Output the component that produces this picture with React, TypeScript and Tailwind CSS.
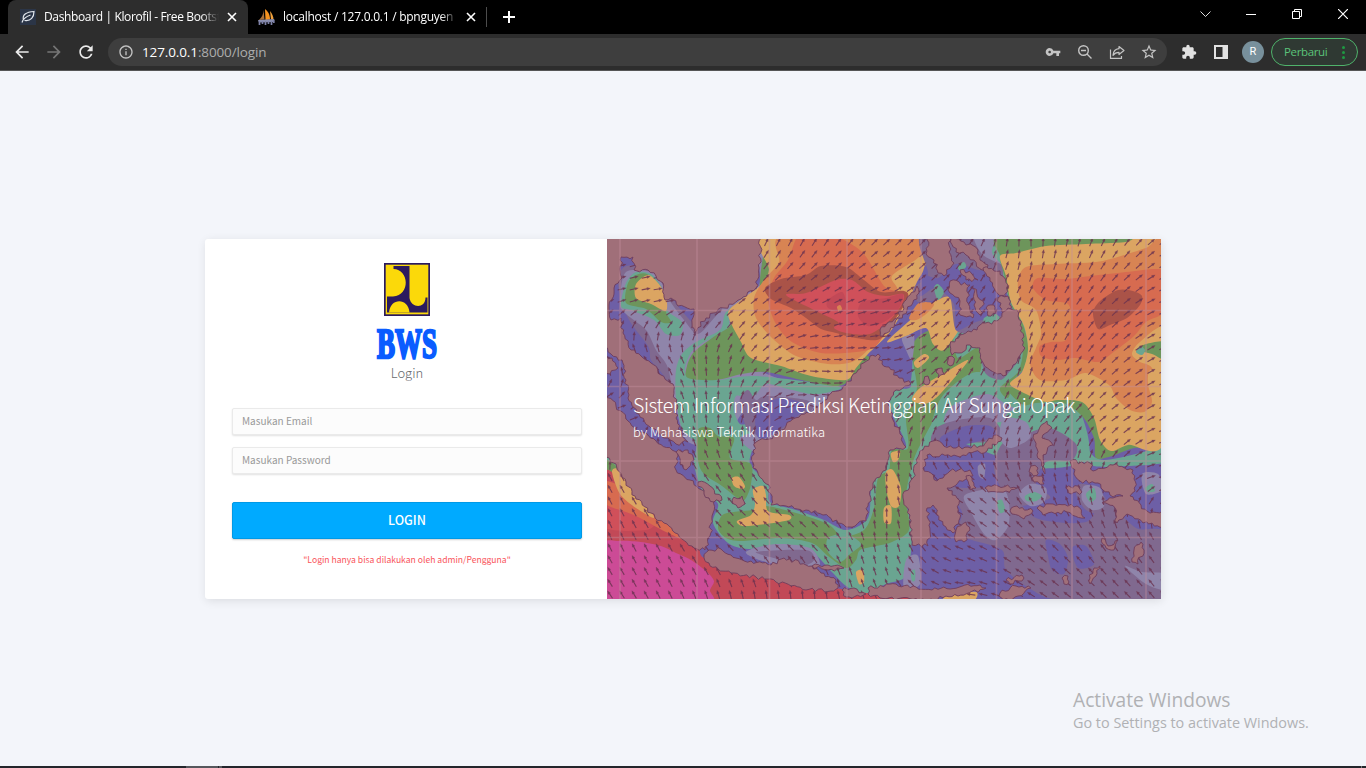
import type { ReactNode } from "react";
import {
  MdArrowBack,
  MdArrowForward,
  MdRefresh,
  MdInfoOutline,
  MdVpnKey,
  MdStarBorder,
  MdExtension,
} from "react-icons/md";

type Pt = [number, number];

const parse = (s: string): Pt[] =>
  s.trim().split(/\s+/).map((p) => p.split(",").map(Number) as Pt);

/* Closed Catmull-Rom curve through the given points. */
function smooth(s: string): string {
  const p = parse(s);
  const n = p.length;
  let d = `M${p[0][0]} ${p[0][1]}`;
  for (let i = 0; i < n; i++) {
    const a = p[(i - 1 + n) % n];
    const b = p[i];
    const c = p[(i + 1) % n];
    const e = p[(i + 2) % n];
    const k = 7;
    d += `C${(b[0] + (c[0] - a[0]) / k).toFixed(1)} ${(b[1] + (c[1] - a[1]) / k).toFixed(1)} ${(c[0] - (e[0] - b[0]) / k).toFixed(1)} ${(c[1] - (e[1] - b[1]) / k).toFixed(1)} ${c[0]} ${c[1]}`;
  }
  return d + "Z";
}

/* Irregular coastline: every edge is split and displaced sideways. */
function coast(s: string): string {
  const p = parse(s);
  let seed = Math.round(p[0][0] * 13 + p[0][1] * 7 + p.length * 31) + 5;
  const rnd = () => {
    seed = (seed * 16807) % 2147483647;
    return seed / 2147483647 - 0.5;
  };
  const out: string[] = [];
  p.forEach((a, i) => {
    const b = p[(i + 1) % p.length];
    const dx = b[0] - a[0];
    const dy = b[1] - a[1];
    const len = Math.hypot(dx, dy) || 1;
    const steps = Math.max(1, Math.round(len / 3));
    for (let j = 0; j < steps; j++) {
      const t = j / steps;
      const off = j === 0 ? 0 : rnd() * 4;
      out.push(`${(a[0] + dx * t - (dy / len) * off).toFixed(1)} ${(a[1] + dy * t + (dx / len) * off).toFixed(1)}`);
    }
  });
  return "M" + out.join("L") + "Z";
}

const MAUVE = "#80698f";
const LAV = "#8f85aa";
const TEAL = "#6aa591";
const GREEN = "#6d955b";
const TAN = "#dba562";
const ORANGE = "#d88453";
const CORAL = "#d76b50";
const BRICK = "#aa5348";
const ROSE = "#d0505a";
const RED = "#c24957";
const PINK = "#cc4b96";
const BLUE = "#6d5fa6";

const SEA: [string, string][] = [
  // gulf and south china sea
  [MAUVE, "12,45 20,28 50,32 66,60 86,84 96,84 130,60 130,120 120,170 70,160 58,138 45,122 42,108 22,80"],
  [LAV, "14,66 20,34 50,36 62,60 78,82 92,96 110,78 130,60 135,120 200,150 228,152 212,166 150,166 130,185 130,205 84,205 70,170 62,130 50,112 40,92 20,76"],
  [TEAL, "15,68 20,45 30,34 45,36 56,50 61,72 76,84 74,97 60,96 48,82 25,72"],
  [GREEN, "20,65 22,45 30,37 41,36 55,50 60,74 65,84 55,84 40,71"],
  [TAN, "30,60 30,46 42,37 52,45 60,58 60,73 45,66"],
  [LAV, "150,0 160,0 160,36 148,54 128,66 140,56 154,44"],
  [TEAL, "158,-4 170,-4 168,34 150,58 124,76 122,90 95,106 84,116 80,136 110,142 150,138 232,148 224,154 205,156 178,150 160,146 150,156 142,160 130,158 128,172 134,186 146,186 148,205 144,226 162,246 164,264 190,272 218,282 240,292 262,280 266,244 280,228 280,214 300,208 288,180 284,164 290,152 305,148 300,120 320,96 380,96 400,150 420,160 350,176 330,196 318,216 310,240 300,262 306,290 304,322 298,340 280,346 258,356 240,348 224,332 205,314 170,308 142,311 122,305 107,285 112,266 96,252 88,226 90,206 76,190 70,160 70,132 76,116 90,104 114,92 120,74 140,60 158,44"],
  [GREEN, "161,-4 170,-4 168,34 146,60 124,77 124,88 106,100 88,114 81,128 82,140 110,142 136,136 160,134 200,143 232,148 247,139 262,118 160,80"],
  [GREEN, "92,192 104,190 112,198 128,200 124,220 145,226 145,246 140,260 134,262 116,248 98,236 92,222"],
  [GREEN, "112,290 118,276 146,272 160,268 190,275 222,286 236,298 258,292 268,270 272,240 283,232 286,212 302,210 300,180 306,165 311,148 306,108 324,92 345,95 352,120 372,110 374,134 352,152 334,172 320,196 309,218 302,244 300,262 303,292 286,304 270,308 254,312 250,322 240,330 222,318 206,305 175,300 136,303 120,300"],
  [TEAL, "222,300 240,296 255,306 244,316 234,324 222,314"],
  [TAN, "131,283 145,277 149,266 147,252 157,248 160,257 162,273 183,277 183,282 160,286 137,288"],
  [TAN, "126,240 133,239 139,248 136,251 128,248"],
  [TAN, "285,215 294,213 292,222 287,224"],
  [TAN, "280,234 287,232 295,250 293,268 285,268 280,250"],
  [TAN, "278,270 285,268 285,285 278,284"],
  [TAN, "250,334 257,332 258,344 253,346"],
  [LAV, "140,314 170,306 204,310 214,326 202,330 160,324"],
  [MAUVE, "150,314 200,312 208,322 196,328 176,322"],
  // north west of borneo
  [LAV, "148,164 160,150 200,156 222,160 200,180 170,204 150,214 134,200 152,190"],
  [MAUVE, "134,160 142,152 150,162 160,158 200,162 206,172 180,190 146,196 136,176"],
  [BLUE, "152,170 176,160 200,168 184,184 160,200 150,196"],
  [TAN, "122,76 135,62 155,47 163,32 162,-4 322,-4 318,30 311,44 300,68 284,94 262,116 250,130 240,142 205,138 175,128 145,120 135,104"],
  [ORANGE, "180,-4 322,-4 314,18 286,38 292,54 280,84 270,102 262,112 246,124 222,126 190,118 166,100 150,80 148,60 158,42 173,24"],
  [CORAL, "194,-4 224,-4 256,14 278,48 292,56 284,84 270,108 250,114 215,115 186,104 170,86 162,62 168,40 182,22"],
  [BRICK, "159,50 175,41 200,37 215,28 240,29 258,42 275,54 298,53 302,60 290,80 274,101 250,100 230,95 215,91 200,80 185,70 165,61"],
  [ROSE, "180,57 200,55 230,42 246,42 262,54 280,58 297,56 296,66 284,82 264,96 240,95 228,90 232,84 208,72"],
  [RED, "256,64 280,60 297,56 292,72 278,84 262,88 252,78"],
  [RED, "222,62 236,54 240,66 236,74 222,70"],
  [ORANGE, "231,69 234,67 236,71 233,74"],
  // borneo north east corner and sulu sea
  [BLUE, "272,112 296,100 306,106 304,146 290,140"],
  [LAV, "296,100 308,98 306,122 300,112"],
  [TAN, "281,104 302,84 320,70 342,56 352,72 356,86 338,112 327,106 320,90 300,98"],
  [ORANGE, "303,80 313,65 328,66 320,76 310,82"],
  [TAN, "308,124 318,116 323,120 312,130"],
  [TAN, "314,150 340,134 362,122 350,138 330,160 318,166 306,162"],
  [TEAL, "330,170 344,150 370,134 404,142 430,150 470,166 482,220 430,230 370,210 334,196 320,216"],
  [LAV, "346,168 380,156 400,166 420,178 380,186 340,186"],
  [MAUVE, "330,190 352,182 384,180 396,196 380,204 350,204 326,204"],
  [BLUE, "336,198 360,188 384,188 388,198 360,206 336,206"],
  // philippines waters
  [MAUVE, "316,-4 392,-4 390,14 400,34 410,70 420,110 404,140 380,136 370,100 350,92 344,60 330,62 312,64 308,50 322,36"],
  [LAV, "368,-4 394,-4 392,16 396,26 376,16"],
  [BLUE, "318,38 332,40 350,26 372,32 392,34 402,50 408,72 370,84 350,92 348,66 330,50 314,58"],
  [TEAL, "328,50 332,46 338,54 332,62"],
  [TEAL, "352,28 358,24 360,29 354,33"],
  [TEAL, "378,80 390,76 394,84 380,88"],
  [TEAL, "386,14 394,-4 404,-4 402,18 400,36 408,66 420,84 423,112 417,132 402,146 394,150 390,146 400,138 414,118 414,90 406,68 398,46 396,28"],
  [GREEN, "394,18 400,-4 560,-4 560,8 480,12 412,20 404,60 416,84 422,108 418,130 408,142 402,160 394,150 412,134 417,112 414,90 404,64 399,40"],
  // pacific
  [GREEN, "400,148 430,146 520,150 560,150 560,206 528,210 506,218 490,220 488,200 476,178 454,164 420,168"],
  [TEAL, "430,165 456,168 476,186 484,214 498,222 530,216 560,208 560,224 520,228 488,228 464,216 440,196 400,178"],
  [TAN, "394,18 410,15 440,8 480,6 520,4 560,-2 560,198 522,207 505,213 494,202 488,180 476,164 452,162 440,164 420,156 404,146 416,134 422,112 418,88 405,64 400,38"],
  [ORANGE, "412,43 420,29 450,26 490,24 515,18 540,10 560,4 560,124 544,132 542,146 546,164 538,174 524,172 510,160 503,147 480,135 460,142 434,142 424,126 430,110 435,95 430,72 415,62"],
  [CORAL, "427,50 432,40 460,41 485,38 520,34 550,31 560,36 560,72 540,84 528,98 505,116 492,124 470,120 450,122 435,118 434,108 445,104 460,102 465,84 462,66 440,62"],
  [BRICK, "487,75 494,63 512,52 527,53 536,58 534,67 521,80 504,87 492,91"],
  [TAN, "526,116 534,104 560,90 560,160 546,130 534,124"],
  [GREEN, "532,112 540,106 560,104 560,122 546,116"],
  [TEAL, "530,114 534,108 539,112 536,117"],
  // banda and arafura
  [MAUVE, "396,206 420,196 444,190 470,206 466,222 440,224 430,246 444,260 410,268 396,252 388,230"],
  [LAV, "398,180 420,184 424,200 404,210 394,200"],
  [MAUVE, "340,250 360,250 400,252 430,280 480,284 498,262 530,290 560,296 560,362 456,362 426,352 400,332 396,312 366,302 350,296 356,274"],
  [LAV, "359,257 398,252 403,285 390,302 378,296 366,276"],
  [MAUVE, "474,246 490,250 500,262 496,276 480,272 470,256"],
  [LAV, "478,248 494,250 498,268 486,272 476,262"],
  [LAV, "413,256 424,246 440,250 438,264 424,268"],
  [LAV, "372,228 379,226 378,240 373,238"],
  [LAV, "519,328 536,334 560,336 560,352 540,346"],
  [LAV, "536,236 552,236 556,252 540,256"],
  [LAV, "300,322 312,318 314,346 298,350"],
  [BLUE, "440,302 454,306 462,320 458,336 446,332 442,318"],
  [BLUE, "466,310 480,308 488,326 472,330"],
  [TEAL, "419,258 428,254 436,258 430,263 421,263"],
  [TEAL, "480,256 488,250 490,260 484,264"],
  [TEAL, "391,264 396,262 399,272 394,275"],
  [TEAL, "539,250 546,246 549,253 542,254"],
  [TEAL, "305,334 309,332 309,342 306,343"],
  // indian ocean
  [TEAL, "-4,218 8,222 26,244 46,268 30,262 -4,230"],
  [GREEN, "-4,222 8,226 24,246 30,258 10,250 -4,238"],
  [RED, "-4,238 20,248 50,278 90,306 98,320 140,336 180,340 230,350 270,356 310,357 310,366 -4,366"],
  [ROSE, "-4,246 12,250 34,272 50,282 40,292 -4,288"],
  [CORAL, "-4,244 10,246 26,262 50,276 84,304 60,294 30,278 -4,264"],
  [TAN, "6,234 12,231 22,245 40,266 48,280 30,270 14,256"],
  [PINK, "-4,308 12,303 35,304 55,308 70,315 85,322 100,333 108,343 104,352 101,366 -4,366"],
  [TAN, "340,358 370,354 366,364 340,364"],
];

const LAND: string[] = [
  "-4,-4 155,-4 153,30 150,50 135,61 118,70 100,80 88,95 86,85 88,71 72,68 65,60 59,62 57,45 50,38 42,32 28,32 27,19 15,19 16,40 8,50 3,70 5,82 15,80 17,95 25,112 35,118 45,125 55,137 67,146 70,165 70,180 76,196 82,204 70,206 58,200 45,190 30,175 22,160 20,142 16,122 5,116 -4,106",
  "-4,152 10,168 22,183 35,194 50,203 66,212 72,218 70,232 84,242 96,252 108,262 106,278 104,298 99,312 86,308 72,296 58,285 45,275 30,261 20,244 10,226 -4,216",
  "98,320 103,312 115,311 130,320 145,323 165,327 178,320 200,327 215,335 230,342 232,350 225,353 200,352 170,344 150,339 125,335 112,331 103,325",
  "240,147 252,132 264,118 272,116 276,126 283,129 293,140 305,146 290,152 282,164 287,182 294,196 300,209 284,212 280,232 267,245 262,268 260,283 240,289 217,277 200,272 180,268 165,267 163,247 147,230 147,213 150,204 163,201 180,188 187,181 207,173 222,158",
  "297,260 307,240 314,213 327,203 347,210 374,208 391,197 396,200 381,213 357,217 321,217 317,230 331,243 344,233 364,232 367,238 341,250 351,260 354,280 347,295 337,287 327,267 321,270 324,293 322,308 306,307 304,277",
  "427,200 441,183 446,190 436,200 447,207 437,217 439,236 431,217",
  "431,270 447,266 471,268 479,280 461,274 437,277",
  "404,273 411,268 427,273 418,281",
  "464,223 484,225 487,233 507,227 527,232 529,253 524,258 541,273 560,275 560,290 537,285 521,276 511,285 509,270 496,265 507,260 517,258 504,257 492,245 474,243 466,230",
  "528,312 535,304 538,312 532,326 526,324",
  "379,250 392,248 411,250 400,253 382,254",
  "460,250 472,248 476,254 465,256",
  "484,340 488,330 494,328 490,338 484,346",
  "322,-4 345,-4 343,14 348,25 338,38 332,35 328,22 320,16",
  "341,-4 358,4 372,12 374,22 382,27 376,32 360,17 350,14",
  "377,30 394,33 402,47 400,60 391,55 384,43",
  "344,43 364,47 361,60 367,80 354,77 354,63 344,55",
  "367,50 377,63 374,77 368,67",
  "380,70 388,67 390,75 382,78",
  "354,32 366,36 372,42 360,42",
  "392,60 402,58 404,72 396,74",
  "344,107 354,97 371,92 374,87 391,83 396,75 402,70 411,72 416,90 417,113 407,127 397,138 384,132 376,123 374,110 364,107 352,115 346,117",
  "274,92 291,80 304,57 311,48 313,55 301,72 281,95 274,98",
  "-4,118 6,120 12,130 4,136 -4,130",
  "70,214 82,212 88,222 80,232 74,226",
  "92,244 104,248 116,262 108,264 98,256",
  "126,262 136,258 139,266 132,270",
  "236,352 248,350 260,356 240,359",
  "262,350 290,346 310,349 326,352 374,347 380,350 352,358 325,361 274,360 262,356",
  "394,355 410,348 425,350 412,358 395,364",
  "400,342 416,337 418,340 404,346",
  "350,292 360,284 364,292 358,304 350,304",
  "360,238 366,240 370,250 364,252",
  "425,228 432,230 430,238 423,234",
  "206,328 222,327 238,330 222,332",
  "456,340 462,338 463,344 458,346",
  "342,122 346,118 348,124 344,128",
  "330,134 336,130 338,136 332,140",
  "318,142 322,138 324,144 320,147",
  "426,240 436,238 438,246 428,244",
  "496,300 502,308 512,302 508,312 500,310",
];

/* Wind bearing in degrees (counter clockwise from east) on a coarse lattice. */
const WIND_X = [0, 70, 140, 210, 280, 350, 420, 490, 560];
const WIND: number[][] = [
  [20, 20, 70, 60, 45, 50, 95, 70, 35],
  [15, 5, 40, 28, 20, 50, 62, 52, 22],
  [135, 120, 60, 0, 0, 55, 80, 50, 25],
  [-40, 110, 75, -20, 60, 50, 60, 42, 25],
  [120, 125, 125, 120, 90, 150, 110, 90, 0],
  [115, 120, 145, 140, 90, 155, 138, 125, 122],
  [125, 115, 98, 92, 120, 180, 150, 138, 130],
];

function wind(x: number, y: number): number {
  const gx = Math.min(7.999, x / 70);
  const gy = Math.min(5.999, y / 60);
  const i = Math.floor(gx);
  const j = Math.floor(gy);
  const u = gx - i;
  const v = gy - j;
  return (
    WIND[j][i] * (1 - u) * (1 - v) +
    WIND[j][i + 1] * u * (1 - v) +
    WIND[j + 1][i] * (1 - u) * v +
    WIND[j + 1][i + 1] * u * v
  );
}

const ARROWS: { x: number; y: number; a: number }[] = [];
for (let r = 0; r < 31; r++) {
  for (let c = 0; c < 47; c++) {
    const x = 4 + c * 12.03;
    const y = 4 + r * 11.75;
    if (x <= WIND_X[WIND_X.length - 1]) ARROWS.push({ x, y, a: -wind(x, y) });
  }
}

function WindMap() {
  return (
    <svg className="absolute inset-0 h-full w-full" viewBox="1 1 554 360" preserveAspectRatio="none">
      <rect width="560" height="366" fill={BLUE} />
      {SEA.map(([fill, pts], i) => (
        <path key={i} d={smooth(pts)} fill={fill} />
      ))}
      <g stroke="#6b3350" strokeWidth="1.1" fill="#6b3350" opacity="0.85">
        {ARROWS.map((w, i) => (
          <g key={i} transform={`translate(${w.x.toFixed(1)} ${w.y.toFixed(1)}) rotate(${w.a.toFixed(0)})`}>
            <path d="M-4.5 0H2" />
            <path d="M1 -1.4L4.400 0L1 1.4Z" strokeWidth="0.2" />
          </g>
        ))}
      </g>
      <g fill="#a06f79" stroke="#6f3d5c" strokeWidth="0.9" strokeLinejoin="round">
        {LAND.map((pts, i) => (
          <path key={i} d={coast(pts)} />
        ))}
      </g>
      <g stroke="#c48f9d" strokeWidth="1.6" opacity="0.42">
        {[14, 91, 163.5, 241, 315, 390.5, 466, 540].map((x) => (
          <path key={x} d={`M${x} 0V362`} />
        ))}
        {[72.5, 148.5, 223, 299.5].map((y) => (
          <path key={y} d={`M0 ${y}H556`} />
        ))}
      </g>
    </svg>
  );
}

function Logo() {
  return (
    <svg width="46" height="53" viewBox="0 0 46 53" className="block">
      <rect width="46" height="53" fill="#2b1a5e" />
      <rect x="1.7" y="1.7" width="42.600" height="49.600" fill="#fbd90a" />
      <path d="M9.500 3H25.500V35C27 45.500 41.500 46 41.500 34.500H43.500V49.500H3V33.500H9C27 32 25 6.500 9.500 6Z" fill="#2b1a5e" />
      <path d="M5 49.500C6 35 24 34 25.500 49.500Z" fill="#fbd90a" />
    </svg>
  );
}

function Tab({ icon, title, active, width }: { icon: ReactNode; title: string; active?: boolean; width: string }) {
  return (
    <div className={`relative flex h-[34px] items-center ${width} ${active ? "rounded-t-lg bg-[#2d2d2d]" : ""}`}>
      {icon}
      <span
        className={`ml-2 w-[175px] overflow-hidden font-['Open_Sans',sans-serif] text-[12px] whitespace-nowrap ${active ? "tracking-[-0.36px]" : "tracking-[-0.25px]"} text-white [mask-image:linear-gradient(to_right,#000_90%,transparent)]`}
      >
        {title}
      </span>
      <svg width="10" height="10" viewBox="0 0 10 10" stroke="#fff" strokeWidth="1.6" className="ml-[8px] shrink-0">
        <path d="M1 1L9 9M9 1L1 9" />
      </svg>
    </div>
  );
}

function LeafIcon() {
  return (
    <svg width="16" height="16" viewBox="0 0 16 16" className="ml-3 shrink-0">
      <rect width="16" height="16" fill="#2b3547" />
      <path d="M2 13.500C3 10 6 7.500 10.500 6M3.500 11C2 6 6 3 14 2.500C14 8 11 12.500 4.500 11.500" fill="none" stroke="#e3e8ee" strokeWidth="1.2" />
    </svg>
  );
}

function SailIcon() {
  return (
    <svg width="17" height="16" viewBox="0 0 17 16" className="ml-[10px] shrink-0">
      <path d="M5.500 1C5.500 5 4 8 1 11L6.500 10.500Z" fill="#a8703a" />
      <path d="M7 0C11 3 12 7 12 10.500L7.500 11Z" fill="#f59320" />
      <path d="M12 2C14.500 5 15.500 8 15.500 10.500L13 10.500Z" fill="#f0a13c" />
      <path d="M0 11L16.500 10L15 13L1 13.500Z" fill="#8b8fae" />
      <path d="M1.500 16V12M4.500 15V12M7.500 16V12M10.500 15V12M13.500 16V12M15.800 14V11" stroke="#7c80a6" strokeWidth="1.7" />
    </svg>
  );
}

function BrowserChrome() {
  return (
    <header className="shrink-0 bg-black">
      <div className="flex h-[34px] items-center">
        <Tab icon={<LeafIcon />} title="Dashboard | Klorofil - Free Bootst" active width="ml-2 w-[240px]" />
        <Tab icon={<SailIcon />} title="localhost / 127.0.0.1 / bpnguyen |" width="w-[238px]" />
        <div className="h-5 w-px bg-[#4c4c4c]" />
        <svg width="12" height="12" viewBox="0 0 12 12" stroke="#fff" strokeWidth="2" className="ml-4">
          <path d="M6 0V12M0 6H12" />
        </svg>
        <div className="mr-[18px] mb-[6px] ml-auto flex items-center gap-9">
          <svg width="11" height="6" viewBox="0 0 11 6" fill="none" stroke="#ddd" className="-mr-px">
            <path d="M.5 .5L5.500 5.500L10.500 .5" />
          </svg>
          <svg width="10" height="10" viewBox="0 0 10 10" stroke="#fff">
            <path d="M0 5.500H10" />
          </svg>
          <svg width="10" height="10" viewBox="0 0 10 10" fill="none" stroke="#fff">
            <path d="M.5 2.500H7.500V9.500H.5ZM2.500 2.500V.5H9.500V7.500H7.500" />
          </svg>
          <svg width="10" height="10" viewBox="0 0 10 10" stroke="#fff" strokeWidth="1.2">
            <path d="M0 0L10 10M10 0L0 10" />
          </svg>
        </div>
      </div>
      <div className="flex h-[37px] items-center border-b border-[#555] bg-[#2d2d2d] text-[#c4c4c4]">
        <MdArrowBack className="ml-3 size-5 text-[#ebebeb]" />
        <MdArrowForward className="ml-3 size-5 text-[#757575]" />
        <MdRefresh className="ml-3 size-5 text-[#ebebeb]" />
        <div className="ml-3 flex h-7 w-[1059px] items-center rounded-full bg-[#3e3e3e] pr-[10px] pl-2.5">
          <MdInfoOutline className="size-4" />
          <span className="ml-2 font-['Open_Sans',sans-serif] text-[13.500px] tracking-[-0.12px] text-[#adadad]">
            <span className="text-white">127.0.0.1</span>:8000/login
          </span>
          <div className="ml-auto flex items-center gap-4">
            <MdVpnKey className="size-4" />
            <svg width="16" height="16" viewBox="0 0 16 16" fill="none" stroke="currentColor" strokeWidth="1.4">
              <circle cx="6.500" cy="6.500" r="4.800" />
              <path d="M10 10L14.500 14.500M4 6.500H9" />
            </svg>
            <svg width="16" height="16" viewBox="0 0 16 16" fill="none" stroke="currentColor" strokeWidth="1.2" strokeLinejoin="round">
              <path d="M1.500 5.500V14.400H12.500V12M10 2.500L15 6.500L10 10.500V8.300C7.300 8.300 5.500 9.200 4 11.300C4.300 7.700 6.500 5 10 4.700Z" />
            </svg>
            <MdStarBorder className="-mx-px size-[18px]" />
          </div>
        </div>
        <MdExtension className="ml-3.5 size-4 text-[#e2e2e2]" />
        <svg width="14" height="14" viewBox="0 0 14 14" className="ml-[17px]">
          <path d="M0 0H14V14H0ZM2 2V12H8.500V2Z" fill="#e2e2e2" fillRule="evenodd" />
        </svg>
        <div className="ml-3.5 grid size-[22px] place-items-center rounded-full bg-[#78909c] font-['Roboto',sans-serif] text-[11px] text-white">
          R
        </div>
        <div className="ml-[7px] flex h-7 w-[87px] items-center justify-between rounded-full border border-[#4fb36b] bg-[#2f3933] pr-3 pl-3 font-['Open_Sans',sans-serif] text-[11.500px] tracking-[-0.35px] text-[#5bc47a]">
          Perbarui
          <svg width="3" height="13" viewBox="0 0 3 13" fill="#1e9a43">
            <circle cx="1.500" cy="1.500" r="1.500" />
            <circle cx="1.500" cy="6.500" r="1.500" />
            <circle cx="1.500" cy="11.500" r="1.500" />
          </svg>
        </div>
      </div>
    </header>
  );
}

function Field({ placeholder, type }: { placeholder: string; type: string }) {
  return (
    <input
      type={type}
      placeholder={placeholder}
      className="block h-[27px] w-full rounded-[2px] border border-[#eaeaea] bg-[#fcfcfc] px-[9px] pb-0.5 text-[10px] shadow-[0_1px_2px_rgba(0,0,0,0.12)] outline-none placeholder:text-[#999]"
    />
  );
}

export default function App() {
  return (
    <div className="flex h-[768px] w-[1366px] flex-col overflow-hidden bg-[#f3f5fa] font-['Noto_Sans_CJK_SC',sans-serif]">
      <BrowserChrome />
      <main className="flex grow flex-col">
        <div className="mt-[168px] ml-[205px] flex h-[360px] w-[956px] rounded-[3px] bg-white shadow-[1px_2px_10px_rgba(0,0,0,0.1)]">
          <section className="flex w-[402px] flex-col items-center px-[27px] pr-[25px] pt-6">
            <Logo />
            <svg width="64" height="34" viewBox="0 0 64 34" className="mt-[11px] block overflow-visible">
              <text
                x="2"
                y="30.500"
                textLength="60"
                lengthAdjust="spacingAndGlyphs"
                fill="#0a5cff"
                stroke="#0a5cff"
                strokeWidth="2.5"
                className="font-['Liberation_Serif',serif] text-[42px] font-bold"
              >
                BWS
              </text>
            </svg>
            <p className="mt-0.5 text-[13px] leading-5 font-light text-[#676a6d]">Login</p>
            <form className="mt-[25px] flex w-full flex-col">
              <Field type="email" placeholder="Masukan Email" />
              <div className="h-3" />
              <Field type="password" placeholder="Masukan Password" />
              <button
                type="button"
                className="mt-7 h-[37px] rounded-[2px] border border-[#0099e6] bg-[#00aaff] text-[12.500px] font-medium text-white shadow-[0_1px_2px_rgba(0,0,0,0.2)]"
              >
                LOGIN
              </button>
            </form>
            <p className="mt-3 text-[8.600px] leading-4 text-[#f9545b]">"Login hanya bisa dilakukan oleh admin/Pengguna"</p>
          </section>
          <section className="relative w-[554px] overflow-hidden">
            <WindMap />
            <div className="relative pt-[152px] pl-[26px] whitespace-nowrap text-white">
              <h1 className="text-[19.500px] leading-7 font-light tracking-[-0.4px]">Sistem Informasi Prediksi Ketinggian Air Sungai Opak</h1>
              <p className="mt-[3px] text-[13px] leading-5 font-light tracking-[-0.03px]">by Mahasiswa Teknik Informatika</p>
            </div>
          </section>
        </div>
        <aside className="mt-[87px] ml-[1073px] font-['Open_Sans',sans-serif] whitespace-nowrap text-[#b0b1b4]">
          <p className="text-[19.200px] leading-7">Activate Windows</p>
          <p className="text-[14.400px] leading-[18px]">Go to Settings to activate Windows.</p>
        </aside>
      </main>
      <footer className="flex h-0.5 shrink-0 bg-[#23252b]">
        <div className="ml-[186px] h-full w-8 bg-[#55575c]" />
        <div className="ml-px h-full w-[3px] bg-[#55575c]" />
        <div className="mr-1 ml-auto h-full w-px bg-[#77797e]" />
      </footer>
    </div>
  );
}
